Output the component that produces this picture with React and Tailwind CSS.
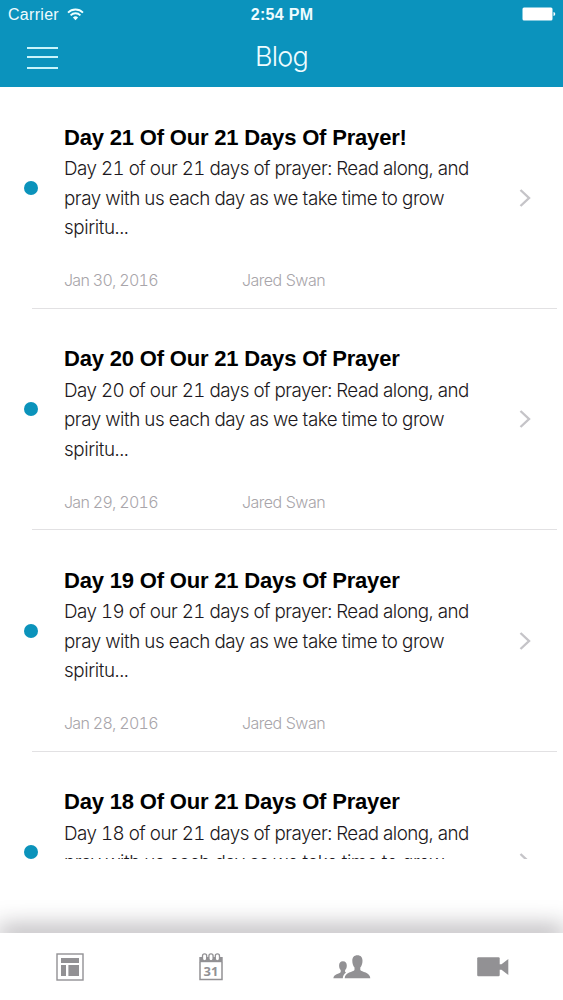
import React from 'react';

const posts = [
  { day: 21, title: 'Day 21 Of Our 21 Days Of Prayer!', date: 'Jan 30, 2016', author: 'Jared Swan' },
  { day: 20, title: 'Day 20 Of Our 21 Days Of Prayer', date: 'Jan 29, 2016', author: 'Jared Swan' },
  { day: 19, title: 'Day 19 Of Our 21 Days Of Prayer', date: 'Jan 28, 2016', author: 'Jared Swan' },
  { day: 18, title: 'Day 18 Of Our 21 Days Of Prayer' },
];

const WifiIcon = () => (
  <svg width="17" height="13" viewBox="0 0 17 13" fill="none" stroke="#f0ffff" strokeWidth="1.8">
    <path d="M1 4.6a10.6 10.6 0 0 1 15 0" />
    <path d="M3.6 7.3a6.9 6.9 0 0 1 9.8 0" />
    <path d="M8.5 12.2 5.9 9.5a3.7 3.7 0 0 1 5.2 0z" fill="#f0ffff" stroke="none" />
  </svg>
);

const BatteryIcon = () => (
  <svg width="34" height="14" viewBox="0 0 34 14" fill="#fff">
    <rect x="0.5" y="0.5" width="30" height="13" rx="1.5" />
    <path d="M31.5 5v4c1.2-.3 1.7-1 1.7-2s-.5-1.7-1.7-2z" />
  </svg>
);

const NewsIcon = () => (
  <svg width="28" height="28" viewBox="0 0 28 28" fill="#929194">
    <rect x="1" y="1" width="26" height="26" fill="none" stroke="#929194" strokeWidth="1.4" />
    <rect x="5" y="5" width="18" height="5" />
    <rect x="5" y="12" width="5" height="11" />
    <rect x="12.4" y="12" width="10.6" height="11" />
  </svg>
);

const CalendarIcon = () => (
  <svg width="24" height="28" viewBox="0 0 24 28" fill="#929194">
    <path d="M1 9v17.5h22V9" fill="none" stroke="#929194" strokeWidth="1.5" />
    <rect x="0.3" y="4" width="23.4" height="5.2" />
    <g fill="#fff" stroke="#929194" strokeWidth="1.3">
      <rect x="3.5" y="0.8" width="4.2" height="7" rx="2.1" />
      <rect x="9.9" y="0.8" width="4.2" height="7" rx="2.1" />
      <rect x="16.3" y="0.8" width="4.2" height="7" rx="2.1" />
    </g>
    <text x="12" y="22.6" textAnchor="middle" fontSize="13" fontWeight="700" fontFamily="Open Sans, sans-serif">31</text>
  </svg>
);

const PeopleIcon = () => (
  <svg width="38" height="24" viewBox="0 0 38 24" fill="#929194">
    <path d="M24.4 0.3c3.4 0 5.1 2.2 5.1 5.4 0 2.6-.8 5.2-2.2 6.7v2.7c1.2 2 9.9 2.2 10 8.2H11.7c.1-6 8.6-6.2 9.8-8.2v-2.7c-1.4-1.5-2.2-4.1-2.2-6.7 0-3.2 1.7-5.4 5.1-5.4z" />
    <path d="M9.9 6.3c2.7 0 3.9 1.7 3.9 4.1 0 1.9-.6 3.7-1.7 4.7v1.8l1 .7c-1.7 1.1-3.1 2.8-3.3 5.7H.4c0-4.4 6.2-4.5 7.3-6.4v-1.8c-1-1-1.6-2.8-1.6-4.7 0-2.4 1.2-4.1 3.8-4.1z" />
  </svg>
);

const VideoIcon = () => (
  <svg width="32" height="20" viewBox="0 0 32 20" fill="#929194">
    <rect x="0.2" y="0.3" width="22.5" height="19" rx="1.2" />
    <path d="M22 7.2h2.5L31.3 2v16l-6.8-5.2H22z" />
  </svg>
);

const PostRow = ({ post }) => (
  <li className="h-[221.5px] shrink-0 pl-8 pr-[6px]">
    <div className="flex h-full border-b border-[#e2e1e3]">
      {/* Unread marker */}
      <div className="-ml-2 mt-[93.9px] h-[14px] w-[14px] shrink-0 rounded-full bg-[#0b93bb]" />
      <div className="ml-[26px] w-[426px] pt-[35.9px]">
        <h2 className="whitespace-nowrap font-['Liberation_Sans',sans-serif] text-[22px] font-bold leading-[30px] tracking-[-0.18px] text-black">
          {post.title}
        </h2>
        <p className="mt-[1.6px] whitespace-nowrap text-[18.8px] font-light tabular-nums leading-[29.3px] text-[#1c1820]">
          <span className="tracking-[-0.52px]">Day {post.day} of our 21 days of prayer: Read along, and</span>
          <br />
          <span className="tracking-[-0.46px]">pray with us each day as we take time to grow</span>
          {/* The last row is cut off by the list's lower edge */}
          {post.date && (
            <>
              <br />
              <span className="tracking-[-0.4px]">spiritu...</span>
            </>
          )}
        </p>
        {post.date && (
          <div className="mt-[26px] flex text-[16px] font-light leading-6 text-[#a8a5aa]">
            <span className="w-[178px] tabular-nums tracking-[-0.7px]">{post.date}</span>
            <span className="tracking-[-0.5px]">{post.author}</span>
          </div>
        )}
      </div>
      <svg className="ml-[29px] mt-[100.9px] shrink-0" width="13" height="20" viewBox="0 0 13 20" fill="none" stroke="#c5c4c8" strokeWidth="2.4">
        <path d="M1.5 2l8.5 8-8.5 8" />
      </svg>
    </div>
  </li>
);

export default function App() {
  return (
    <div className="flex h-[1000px] w-[563px] flex-col overflow-hidden bg-white font-[Inter,sans-serif]">
      <header className="h-[87px] shrink-0 bg-[#0b93bd] text-[#effcff]">
        <div className="grid h-7 grid-cols-3 items-center pl-2 pr-[7px]">
          <div className="flex items-center gap-2">
            <span className="pt-[2px] font-['Liberation_Sans',sans-serif] text-[16px] leading-6 tracking-[0.3px]">Carrier</span>
            <WifiIcon />
          </div>
          <span className="pt-px text-center font-['Liberation_Sans',sans-serif] text-[16px] font-bold tracking-[0.3px]">2:54 PM</span>
          <div className="flex justify-end">
            <BatteryIcon />
          </div>
        </div>
        <div className="grid h-[59px] grid-cols-3 items-center">
          <button className="ml-[27px] flex w-[31px] flex-col">
            <span className="h-[2px] bg-[#c9f4fb]" />
            <span className="mt-[7px] h-[2px] bg-[#c9f4fb]" />
            <span className="mt-[9px] h-[2px] bg-[#c9f4fb]" />
          </button>
          <h1 className="text-center text-[27px] font-light tracking-[-0.8px]">Blog</h1>
        </div>
      </header>

      <ul className="flex h-[772px] shrink-0 flex-col overflow-hidden">
        {posts.map((post) => (
          <PostRow key={post.day} post={post} />
        ))}
      </ul>

      <div className="flex h-[74px] shrink-0 items-end overflow-hidden px-[2px]">
        <div className="h-1 w-full translate-y-1 shadow-[0_0_24px_4px_rgba(40,32,44,0.55)]" />
      </div>

      <nav className="grid h-[67px] shrink-0 grid-cols-4 items-center justify-items-center bg-white pt-px">
        <NewsIcon />
        <CalendarIcon />
        <PeopleIcon />
        <VideoIcon />
      </nav>
    </div>
  );
}
